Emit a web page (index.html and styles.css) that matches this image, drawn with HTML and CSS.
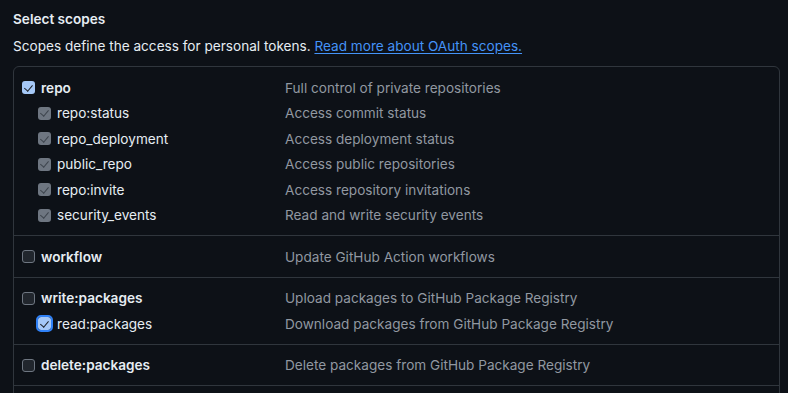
FILE: index.html
```html
<!DOCTYPE html>
<html>
<head>
  <title>Select scopes</title>
  <link rel="stylesheet" href="styles.css">
</head>
<body>
  <div class="container">
    <h3 class="title">Select scopes</h3>
    <p class="subtitle">Scopes define the access for personal tokens. <a href="#" class="link">Read more about OAuth scopes.</a></p>

    <div class="scopes">
      <div class="scope-group">
        <div class="scope-row">
          <label class="scope-name top"><span class="check checked"></span>repo</label>
          <span class="scope-desc">Full control of private repositories</span>
        </div>
        <div class="scope-row">
          <label class="scope-name sub"><span class="check inherited"></span>repo:status</label>
          <span class="scope-desc">Access commit status</span>
        </div>
        <div class="scope-row">
          <label class="scope-name sub"><span class="check inherited"></span>repo_deployment</label>
          <span class="scope-desc">Access deployment status</span>
        </div>
        <div class="scope-row">
          <label class="scope-name sub"><span class="check inherited"></span>public_repo</label>
          <span class="scope-desc">Access public repositories</span>
        </div>
        <div class="scope-row">
          <label class="scope-name sub"><span class="check inherited"></span>repo:invite</label>
          <span class="scope-desc">Access repository invitations</span>
        </div>
        <div class="scope-row">
          <label class="scope-name sub"><span class="check inherited"></span>security_events</label>
          <span class="scope-desc">Read and write security events</span>
        </div>
      </div>

      <div class="scope-group">
        <div class="scope-row">
          <label class="scope-name top"><span class="check"></span>workflow</label>
          <span class="scope-desc">Update GitHub Action workflows</span>
        </div>
      </div>

      <div class="scope-group">
        <div class="scope-row">
          <label class="scope-name top"><span class="check"></span>write:packages</label>
          <span class="scope-desc">Upload packages to GitHub Package Registry</span>
        </div>
        <div class="scope-row">
          <label class="scope-name sub"><span class="check checked focused"></span>read:packages</label>
          <span class="scope-desc">Download packages from GitHub Package Registry</span>
        </div>
      </div>

      <div class="scope-group">
        <div class="scope-row">
          <label class="scope-name top"><span class="check"></span>delete:packages</label>
          <span class="scope-desc">Delete packages from GitHub Package Registry</span>
        </div>
      </div>
    </div>
  </div>
</body>
</html>
```

FILE: styles.css
```css
* {
  margin: 0;
  padding: 0;
  box-sizing: border-box;
}

html {
  overflow: hidden;
}

body {
  font-family: Inter, "Liberation Sans", sans-serif;
  font-size: 13.6px;
  background: #0d1117;
  color: #e6edf3;
}

.container {
  padding: 9px 8px 0 13px;
}

.title {
  font-size: 13.6px;
  font-weight: 600;
  line-height: 20px;
}

.subtitle {
  margin-top: 7px;
  line-height: 20px;
}

.link {
  color: #4493f8;
  text-decoration: underline;
  text-underline-offset: 2px;
}

.scopes {
  margin-top: 10px;
  padding-bottom: 24px;
  border: 1px solid #30363d;
  border-radius: 6px;
}

.scope-group {
  padding: 8px 0 7px;
  border-bottom: 1px solid #30363d;
}

.scope-row {
  display: flex;
  align-items: center;
  height: 25.5px;
}

.scope-name {
  display: flex;
  align-items: center;
  gap: 6px;
  width: 271px;
  flex-shrink: 0;
}

.scope-name.top {
  padding-left: 8px;
  font-weight: 600;
}

.scope-name.sub {
  padding-left: 24px;
}

.scope-desc {
  color: #9198a1;
}

.check {
  width: 13px;
  height: 13px;
  border-radius: 3px;
  border: 1px solid #6e7681;
  background: #21262d;
  position: relative;
  flex-shrink: 0;
}

.check.checked,
.check.inherited {
  border: none;
}

.check.checked {
  background: #a5c8f7;
}

.check.inherited {
  background: #6e7681;
}

.check.checked::after,
.check.inherited::after {
  content: "";
  position: absolute;
  left: 4px;
  top: 1.5px;
  width: 3.5px;
  height: 7px;
  border: solid #1c2128;
  border-width: 0 1.8px 1.8px 0;
  transform: rotate(40deg);
}

.check.inherited::after {
  border-color: #3d444d;
}

.check.focused {
  outline: 2px solid #2f81f7;
  outline-offset: 0;
}
```
